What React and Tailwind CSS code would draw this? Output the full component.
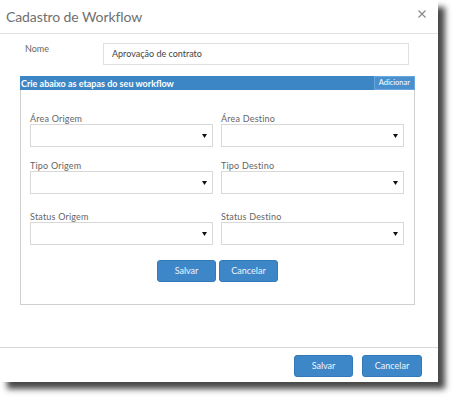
import React from "react";

function Select() {
  return (
    <div className="h-[23px] border border-[#d8d8d8] bg-white flex items-center justify-end pr-[5px]">
      <svg width="5" height="4" viewBox="0 0 5 4"><path d="M0 0h5L2.5 4z" fill="#111" /></svg>
    </div>
  );
}

function Field({ label, mt = "" }) {
  return (
    <div className={mt}>
      <div className="h-[10px] leading-[10px] text-[9px] text-[#666] tracking-[0.2px]">{label}</div>
      <Select />
    </div>
  );
}

function Btn({ children, w = "w-[59px]" }) {
  return (
    <div className={`${w} h-[22px] rounded-[3px] bg-[#3d87c9] border border-[#3479b8] text-[#eef4fb] text-[9px] flex items-center justify-center`}>
      {children}
    </div>
  );
}

export default function App() {
  return (
    <div className="w-[458px] h-[399px] bg-white overflow-hidden" style={{ fontFamily: "Lato, 'Open Sans', sans-serif" }}>
      <div className="w-[438px] h-[382px] bg-white shadow-[7px_7px_6px_rgba(0,0,0,0.72)] flex flex-col">
        <div className="h-[34px] border-b border-[#e3e3e3] flex items-center justify-between pl-[6px] pr-[12px] shrink-0">
          <div className="text-[14px] text-[#707070] leading-none tracking-[-0.1px]">Cadastro de Workflow</div>
          <svg width="8" height="8" viewBox="0 0 8 8" className="mt-[-5px]"><path d="M0.5 0.5L7.5 7.5M7.5 0.5L0.5 7.5" stroke="#8a8a8a" strokeWidth="1.2" /></svg>
        </div>
        <div className="flex-1 flex flex-col">
          <div className="flex mt-[9px] pl-[25px]">
            <div className="w-[78px] text-[9px] text-[#666] pt-[1px] leading-[10px]">Nome</div>
            <div className="w-[306px] h-[22px] border border-[#e0e0e0] flex items-center pl-[8px] text-[9px] text-[#444]">Aprovação de contrato</div>
          </div>
          <div className="mx-[20px] mt-[11px] w-[395px]">
            <div className="h-[14px] bg-[#3d86c6] flex items-center justify-between pl-[1px]">
              <div className="text-[9px] font-bold text-white leading-none">Crie abaixo as etapas do seu workflow</div>
              <div className="h-[14px] px-[4px] bg-[#4a90cf] border border-[#6aa6db] text-[7.5px] text-white flex items-center">Adicionar</div>
            </div>
            <div className="h-[215px] border-x border-b border-[#d0d0d0] px-[9px] pt-[24px]">
              <div className="grid grid-cols-2 gap-x-[8px] w-[374px]">
                <Field label="Área Origem" />
                <Field label="Área Destino" />
                <Field label="Tipo Origem" mt="mt-[14px]" />
                <Field label="Tipo Destino" mt="mt-[14px]" />
                <Field label="Status Origem" mt="mt-[18px]" />
                <Field label="Status Destino" mt="mt-[18px]" />
              </div>
              <div className="flex justify-center gap-[3px] mt-[15px]">
                <Btn>Salvar</Btn>
                <Btn>Cancelar</Btn>
              </div>
            </div>
          </div>
          <div className="flex-1" />
          <div className="border-t border-[#d8d8d8] h-[35px] flex justify-end items-start pt-[7px] pr-[16px] gap-[9px]">
            <Btn>Salvar</Btn>
            <Btn w="w-[60px]">Cancelar</Btn>
          </div>
        </div>
      </div>
    </div>
  );
}
